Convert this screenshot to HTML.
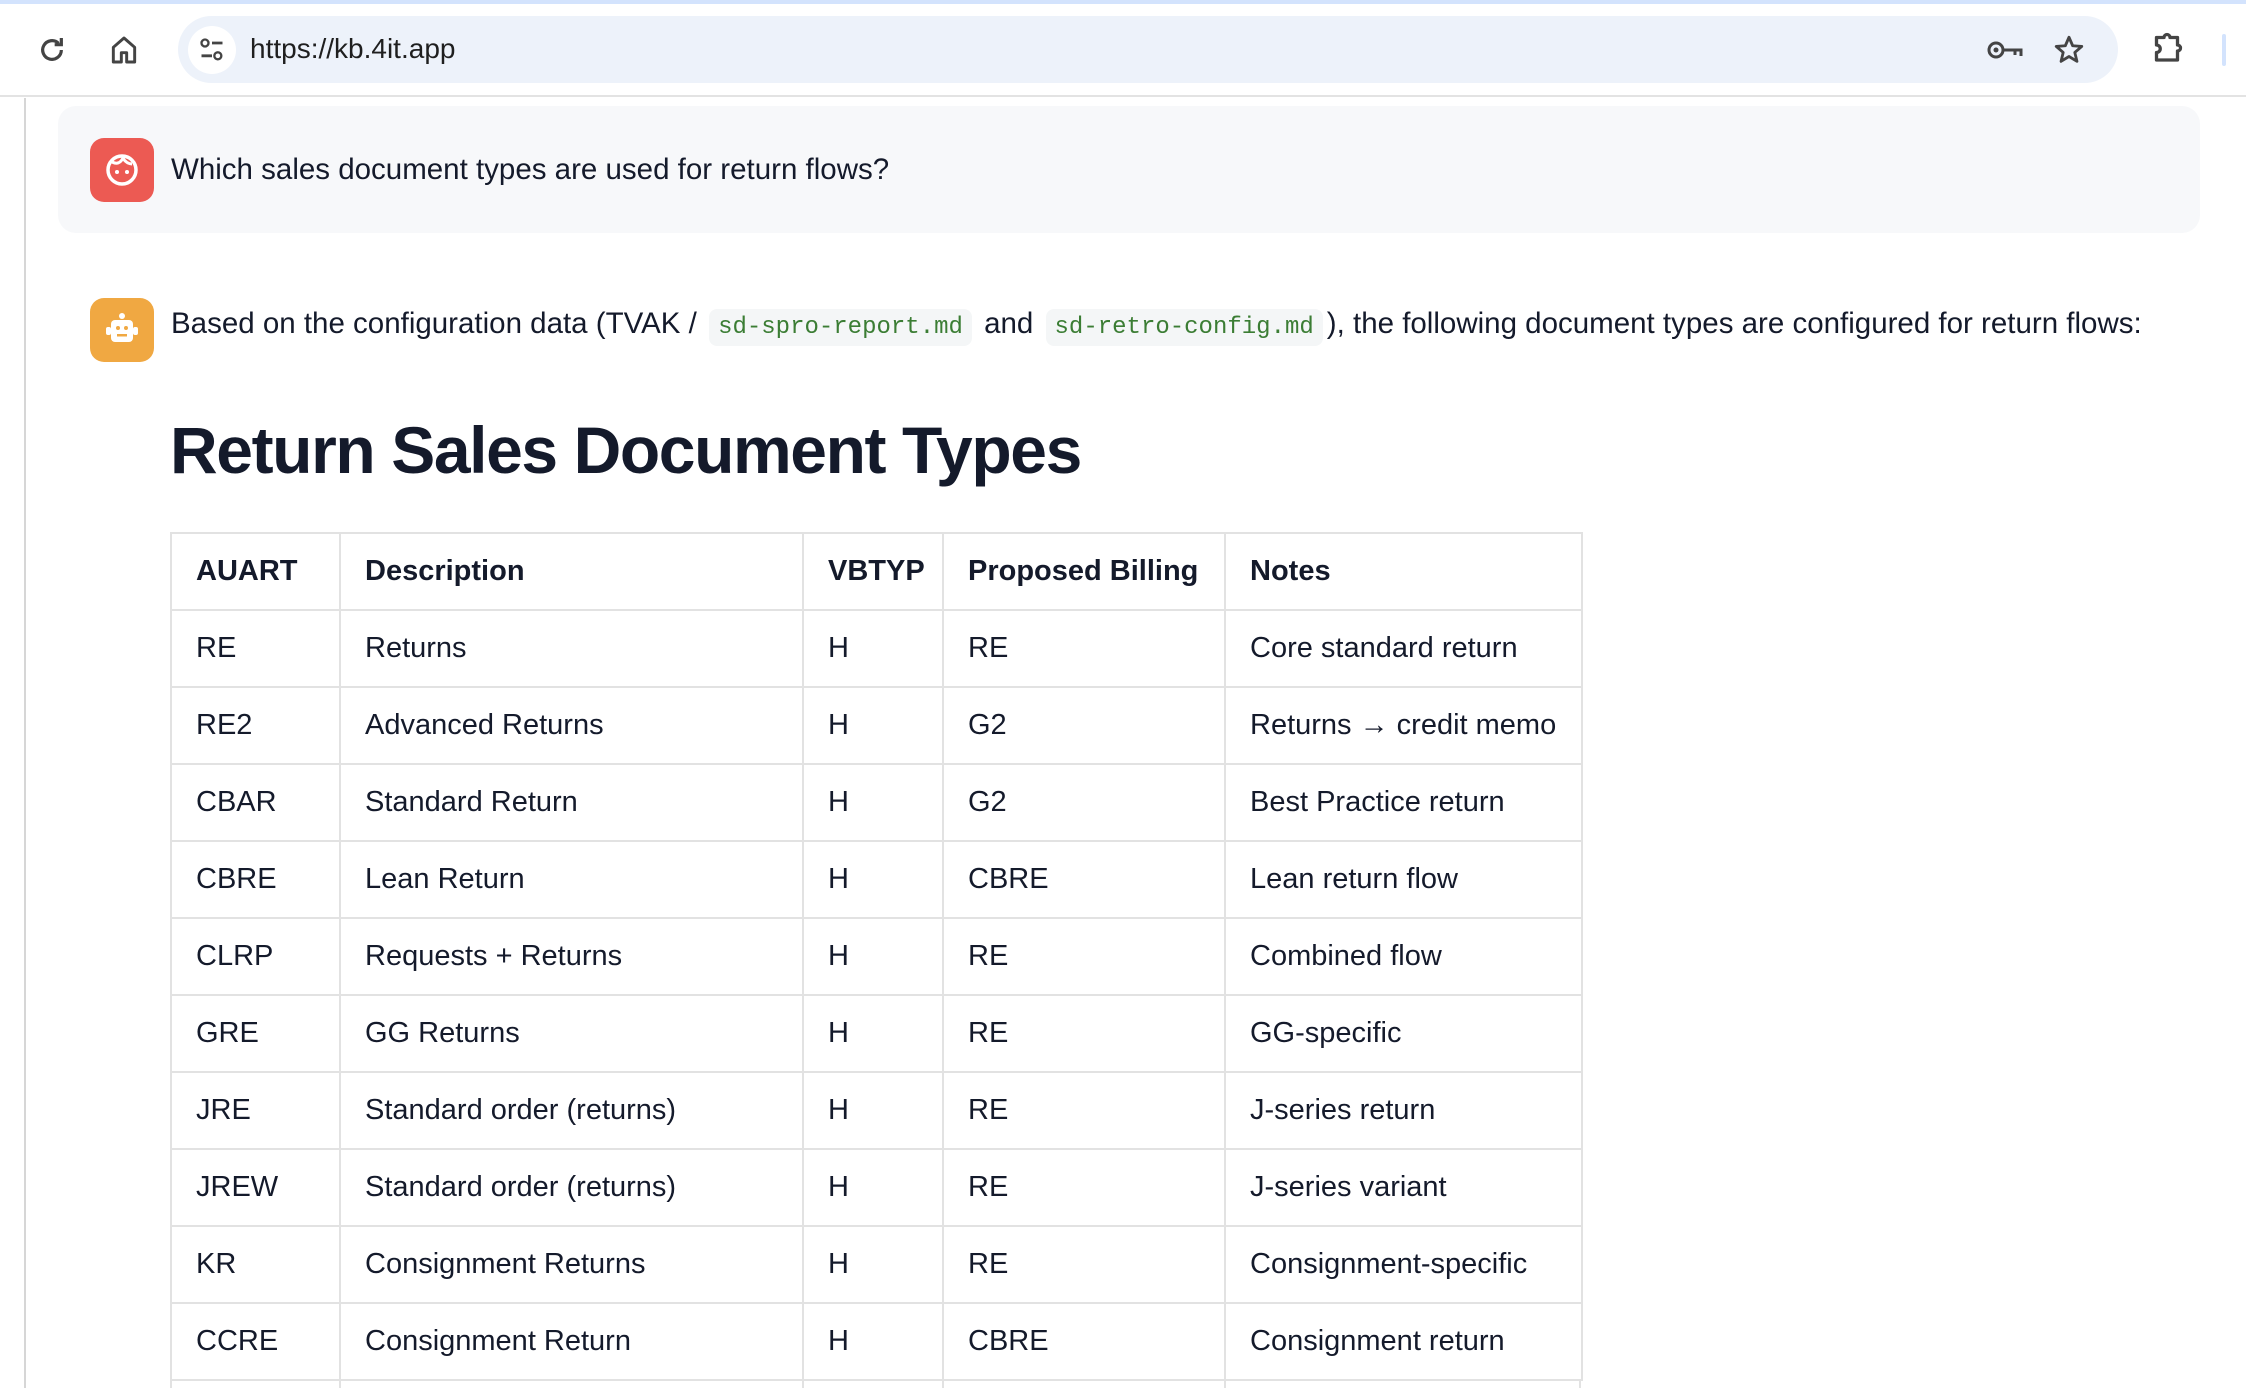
<!DOCTYPE html>
<html style="width:2246px;height:1388px;overflow:hidden"><head><meta charset="utf-8"><style>
*{margin:0;padding:0;box-sizing:border-box}
body{width:2246px;height:1388px;overflow:hidden;background:#fff;font-family:"Liberation Sans",sans-serif;color:#141a2b;position:relative}
.abs{position:absolute}
.strip{left:0;top:0;width:2246px;height:4px;background:#d3e3fd}
.toolbar{left:0;top:4px;width:2246px;height:93px;background:#fff;border-bottom:2px solid #e3e3e3}
.addr{left:178px;top:16px;width:1940px;height:67px;background:#edf2fa;border-radius:34px}
.tune{left:188px;top:26px;width:48px;height:48px;border-radius:24px;background:#fff}
.url{left:250px;top:33px;font-size:28px;color:#1f1f1f}
.vline{left:24px;top:98px;width:2px;height:1290px;background:#d6d6d6}
.qbox{left:58px;top:106px;width:2142px;height:127px;background:#f7f8fa;border-radius:18px}
.icon{width:64px;height:64px;border-radius:14px}
.txt{font-size:29.5px;white-space:nowrap}
code{font-family:"Liberation Mono",monospace;font-size:24px;color:#3b7d34;background:#f4f6f7;border-radius:8px;padding:5px 9px;margin:0 4px}
h1{position:absolute;left:170px;top:412px;font-size:66px;font-weight:bold;letter-spacing:-1.4px;white-space:nowrap}
table{position:absolute;left:170px;top:532px;border-collapse:collapse;font-size:29px;table-layout:fixed;width:1411px}
td,th{border:2px solid #e2e2e2;height:77px;padding:0 0 0 24px;text-align:left;white-space:nowrap;overflow:hidden}
th{font-weight:bold}
</style></head><body>
<div class="abs strip"></div>
<div class="abs toolbar"></div>
<svg class="abs" style="left:36px;top:34px" width="32" height="32" viewBox="0 0 24 24"><path d="M19 12a7 7 0 1 1-2.1-5" fill="none" stroke="#444" stroke-width="2.4"/><path d="M19 3v5h-5" fill="none" stroke="#444" stroke-width="2.4"/></svg>
<svg class="abs" style="left:108px;top:34px" width="32" height="32" viewBox="0 0 24 24"><path d="M4 21V10l8-7 8 7v11h-6v-7h-4v7z" fill="none" stroke="#444" stroke-width="2.2" stroke-linejoin="round"/></svg>
<div class="abs addr"></div>
<div class="abs tune"></div>
<svg class="abs" style="left:198px;top:36px" width="28" height="28" viewBox="0 0 24 24"><circle cx="6" cy="6" r="3" fill="none" stroke="#444" stroke-width="2"/><path d="M12 6h9M3 17h9" stroke="#444" stroke-width="2.4"/><circle cx="17" cy="17" r="3" fill="none" stroke="#444" stroke-width="2"/></svg>
<div class="abs url">https://kb.4it.app</div>
<svg class="abs" style="left:1986px;top:34px" width="40" height="32" viewBox="0 0 40 32"><circle cx="10" cy="16" r="7" fill="none" stroke="#444" stroke-width="3"/><circle cx="10" cy="16" r="2.5" fill="#444"/><path d="M17 16h18v6M29 16v5" fill="none" stroke="#444" stroke-width="3"/></svg>
<svg class="abs" style="left:2052px;top:33px" width="34" height="34" viewBox="0 0 24 24"><path d="M12 3l2.6 6 6.4.5-4.9 4.2 1.5 6.3L12 16.6 6.4 20l1.5-6.3L3 9.5l6.4-.5z" fill="none" stroke="#444" stroke-width="2" stroke-linejoin="round"/></svg>
<svg class="abs" style="left:2152px;top:30px" width="36" height="36" viewBox="0 0 24 24"><path d="M3 5h5a2 2 0 0 1 4 0h5v5a2 2 0 0 1 0 4v6H3v-5a2.5 2.5 0 0 0 0-5z" fill="none" stroke="#444" stroke-width="2.2" stroke-linejoin="round"/></svg>
<div class="abs" style="left:2222px;top:34px;width:4px;height:32px;background:#d3e3fd;border-radius:2px"></div>
<div class="abs vline"></div>
<div class="abs qbox"></div>
<div class="abs icon" style="left:90px;top:138px;background:#ec5a53"></div>
<svg class="abs" style="left:98px;top:146px" width="48" height="48" viewBox="0 0 48 48"><circle cx="24" cy="24" r="14" fill="none" stroke="#fff" stroke-width="3.5"/><path d="M14 16c4 2 8 2 11-4 2 4 6 6 9 6" fill="none" stroke="#fff" stroke-width="3"/><circle cx="19" cy="26" r="2" fill="#fff"/><circle cx="29" cy="26" r="2" fill="#fff"/></svg>
<div class="abs txt" style="left:171px;top:153px">Which sales document types are used for return flows?</div>
<div class="abs icon" style="left:90px;top:298px;background:#f0a842"></div>
<svg class="abs" style="left:98px;top:306px" width="48" height="48" viewBox="0 0 48 48"><circle cx="24" cy="10" r="3" fill="#fff"/><rect x="13" y="14" width="22" height="22" rx="4" fill="#fff"/><rect x="8" y="21" width="5" height="8" rx="2" fill="#fff"/><rect x="35" y="21" width="5" height="8" rx="2" fill="#fff"/><circle cx="20" cy="22" r="2" fill="#f0a842"/><circle cx="28" cy="22" r="2" fill="#f0a842"/><rect x="19" y="28" width="10" height="2.5" fill="#f0a842"/></svg>
<div class="abs txt" style="left:171px;top:307px">Based on the configuration data (TVAK / <code>sd-spro-report.md</code> and <code>sd-retro-config.md</code>), the following document types are configured for return flows:</div>
<h1>Return Sales Document Types</h1>
<table>
<colgroup><col style="width:169px"><col style="width:463px"><col style="width:140px"><col style="width:282px"><col style="width:357px"></colgroup>
<tr><th>AUART</th><th>Description</th><th>VBTYP</th><th>Proposed Billing</th><th>Notes</th></tr>
<tr><td>RE</td><td>Returns</td><td>H</td><td>RE</td><td>Core standard return</td></tr>
<tr><td>RE2</td><td>Advanced Returns</td><td>H</td><td>G2</td><td>Returns → credit memo</td></tr>
<tr><td>CBAR</td><td>Standard Return</td><td>H</td><td>G2</td><td>Best Practice return</td></tr>
<tr><td>CBRE</td><td>Lean Return</td><td>H</td><td>CBRE</td><td>Lean return flow</td></tr>
<tr><td>CLRP</td><td>Requests + Returns</td><td>H</td><td>RE</td><td>Combined flow</td></tr>
<tr><td>GRE</td><td>GG Returns</td><td>H</td><td>RE</td><td>GG-specific</td></tr>
<tr><td>JRE</td><td>Standard order (returns)</td><td>H</td><td>RE</td><td>J-series return</td></tr>
<tr><td>JREW</td><td>Standard order (returns)</td><td>H</td><td>RE</td><td>J-series variant</td></tr>
<tr><td>KR</td><td>Consignment Returns</td><td>H</td><td>RE</td><td>Consignment-specific</td></tr>
<tr><td>CCRE</td><td>Consignment Return</td><td>H</td><td>CBRE</td><td>Consignment return</td></tr>
</table>
<div class="abs" style="left:170px;top:1380px;width:1411px;height:8px;border-left:2px solid #e2e2e2;border-right:2px solid #e2e2e2"></div>
<div class="abs" style="left:339px;top:1380px;width:2px;height:8px;background:#e2e2e2"></div>
<div class="abs" style="left:802px;top:1380px;width:2px;height:8px;background:#e2e2e2"></div>
<div class="abs" style="left:942px;top:1380px;width:2px;height:8px;background:#e2e2e2"></div>
<div class="abs" style="left:1224px;top:1380px;width:2px;height:8px;background:#e2e2e2"></div>
</body></html>
